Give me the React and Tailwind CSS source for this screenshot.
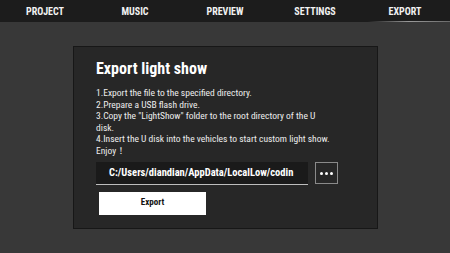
const tabs = ["PROJECT", "MUSIC", "PREVIEW", "SETTINGS", "EXPORT"];

const font = { fontFamily: '"Roboto Condensed","Liberation Sans Narrow","DejaVu Sans Condensed",Roboto,sans-serif' };

const App = () => {
  return (
    <div className="w-[450px] h-[253px] bg-[#383838] flex flex-col overflow-hidden" style={font}>
      <div className="h-[22px] bg-[#1c1c1c] grid grid-cols-5 shrink-0">
        {tabs.map((t, i) => (
          <div key={t} className="relative flex items-center justify-center text-[10px] font-bold text-[#f2f2f2]">
            {t}
            {i === 4 && (
              <div className="absolute left-[8px] right-0 bottom-0 h-[1px] bg-gradient-to-r from-transparent via-[#9a9a9a] to-[#6a6a6a]" />
            )}
          </div>
        ))}
      </div>
      <div className="flex-1 pt-[24px] pl-[73px]">
        <div className="w-[305px] h-[183px] bg-[#272727] border border-[#171717] pl-[22px] pt-[12px]">
          <h1 className="text-[16px] font-bold text-white leading-[20px]">Export light show</h1>
          <div className="mt-[8px] text-[9.5px] leading-[11.6px] text-[#ededed]">
            <p>1.Export the file to the specified directory.</p>
            <p>2.Prepare a USB flash drive.</p>
            <p>3.Copy the "LightShow" folder to the root directory of the U</p>
            <p>disk.</p>
            <p>4.Insert the U disk into the vehicles to start custom light show.</p>
            <p>Enjoy！</p>
          </div>
          <div className="mt-[5px] flex items-center gap-[7px]">
            <div className="w-[212px] h-[23px] bg-[#1a1a1a] border-b border-[#bdbdbd] flex items-center pl-[13px] overflow-hidden whitespace-nowrap text-[10.5px] font-bold text-white">
              C:/Users/diandian/AppData/LocalLow/codin
            </div>
            <button className="w-[23px] h-[22px] border border-[#8a8a8a] flex items-center justify-center gap-[2px]">
              <span className="w-[3px] h-[3px] rounded-full bg-white" />
              <span className="w-[3px] h-[3px] rounded-full bg-white" />
              <span className="w-[3px] h-[3px] rounded-full bg-white" />
            </button>
          </div>
          <button className="mt-[7px] ml-[3px] w-[107px] h-[23px] bg-white text-[9px] font-bold text-[#111111] flex items-center justify-center">
            Export
          </button>
        </div>
      </div>
    </div>
  );
};

export default App;
